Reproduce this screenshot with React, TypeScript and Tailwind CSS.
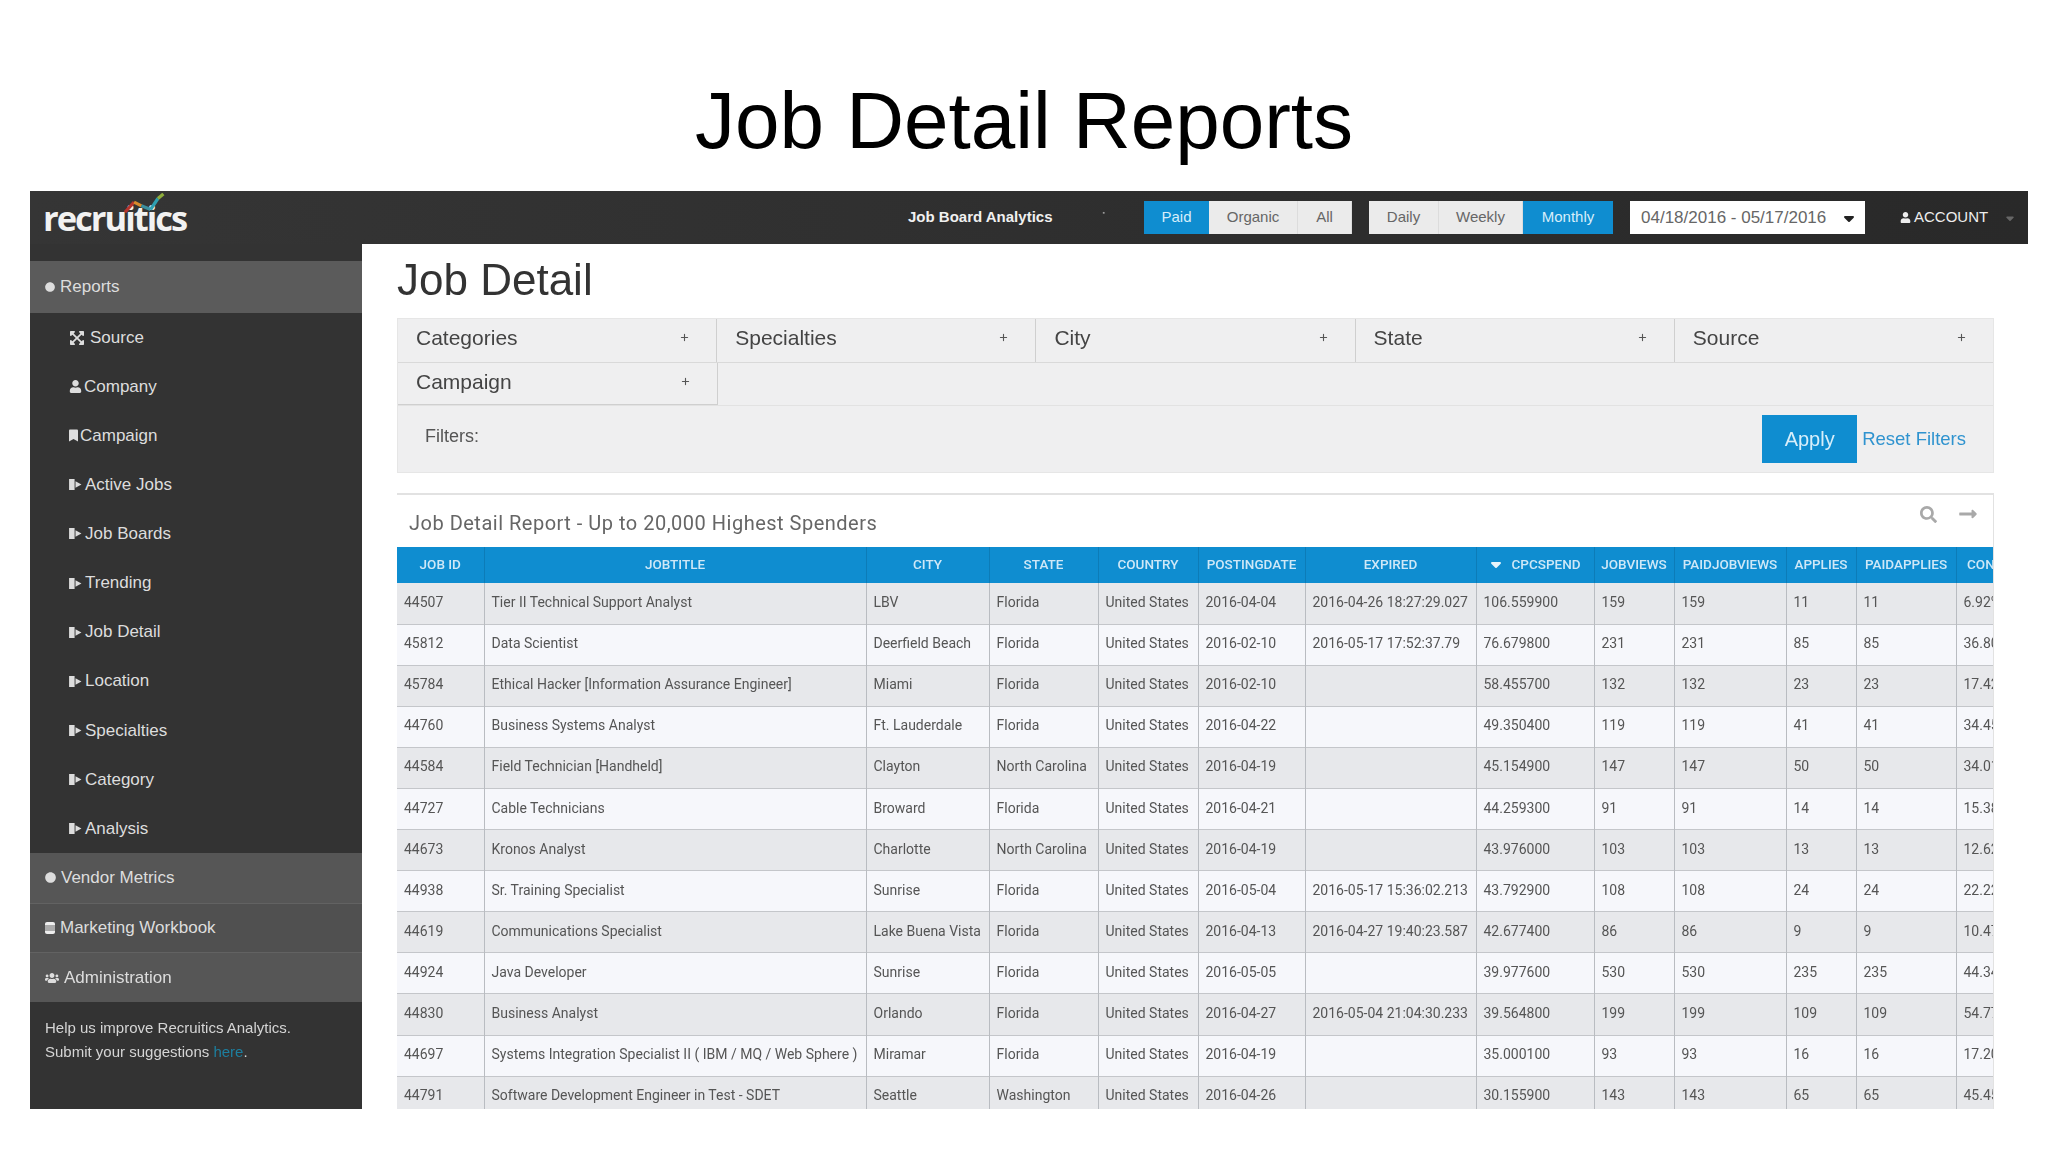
import type { ReactNode } from "react";
import { FaBookmark, FaCircle, FaExpandArrowsAlt, FaLongArrowAltRight, FaSearch, FaUser, FaUsers } from "react-icons/fa";
import { FaCaretDown, FaPlus } from "react-icons/fa6";

const subItems: { label: string; icon: ReactNode }[] = [
  { label: "Source", icon: <FaExpandArrowsAlt className="mr-[3px] h-[16px] w-[16px]" /> },
  { label: "Company", icon: <FaUser className="h-[13px] w-[13px]" /> },
  { label: "Campaign", icon: <FaBookmark className="h-[13px] w-[9px]" /> },
  { label: "Active Jobs", icon: <BarPlay /> },
  { label: "Job Boards", icon: <BarPlay /> },
  { label: "Trending", icon: <BarPlay /> },
  { label: "Job Detail", icon: <BarPlay /> },
  { label: "Location", icon: <BarPlay /> },
  { label: "Specialties", icon: <BarPlay /> },
  { label: "Category", icon: <BarPlay /> },
  { label: "Analysis", icon: <BarPlay /> },
];

const filterCells = ["Categories", "Specialties", "City", "State", "Source"];

const columns = [
  "JOB ID",
  "JOBTITLE",
  "CITY",
  "STATE",
  "COUNTRY",
  "POSTINGDATE",
  "EXPIRED",
  "CPCSPEND",
  "JOBVIEWS",
  "PAIDJOBVIEWS",
  "APPLIES",
  "PAIDAPPLIES",
  "CONVRATE",
];

const rows = [
  ["44507", "Tier II Technical Support Analyst", "LBV", "Florida", "United States", "2016-04-04", "2016-04-26 18:27:29.027", "106.559900", "159", "159", "11", "11", "6.92%"],
  ["45812", "Data Scientist", "Deerfield Beach", "Florida", "United States", "2016-02-10", "2016-05-17 17:52:37.79", "76.679800", "231", "231", "85", "85", "36.80%"],
  ["45784", "Ethical Hacker [Information Assurance Engineer]", "Miami", "Florida", "United States", "2016-02-10", "", "58.455700", "132", "132", "23", "23", "17.42%"],
  ["44760", "Business Systems Analyst", "Ft. Lauderdale", "Florida", "United States", "2016-04-22", "", "49.350400", "119", "119", "41", "41", "34.45%"],
  ["44584", "Field Technician [Handheld]", "Clayton", "North Carolina", "United States", "2016-04-19", "", "45.154900", "147", "147", "50", "50", "34.01%"],
  ["44727", "Cable Technicians", "Broward", "Florida", "United States", "2016-04-21", "", "44.259300", "91", "91", "14", "14", "15.38%"],
  ["44673", "Kronos Analyst", "Charlotte", "North Carolina", "United States", "2016-04-19", "", "43.976000", "103", "103", "13", "13", "12.62%"],
  ["44938", "Sr. Training Specialist", "Sunrise", "Florida", "United States", "2016-05-04", "2016-05-17 15:36:02.213", "43.792900", "108", "108", "24", "24", "22.22%"],
  ["44619", "Communications Specialist", "Lake Buena Vista", "Florida", "United States", "2016-04-13", "2016-04-27 19:40:23.587", "42.677400", "86", "86", "9", "9", "10.47%"],
  ["44924", "Java Developer", "Sunrise", "Florida", "United States", "2016-05-05", "", "39.977600", "530", "530", "235", "235", "44.34%"],
  ["44830", "Business Analyst", "Orlando", "Florida", "United States", "2016-04-27", "2016-05-04 21:04:30.233", "39.564800", "199", "199", "109", "109", "54.77%"],
  ["44697", "Systems Integration Specialist II ( IBM / MQ / Web Sphere )", "Miramar", "Florida", "United States", "2016-04-19", "", "35.000100", "93", "93", "16", "16", "17.20%"],
  ["44791", "Software Development Engineer in Test - SDET", "Seattle", "Washington", "United States", "2016-04-26", "", "30.155900", "143", "143", "65", "65", "45.45%"],
];

function BarPlay() {
  return (
    <svg viewBox="0 0 14 12" className="mr-[1px] h-[11px] w-[13px]" fill="currentColor">
      <rect x="0" y="0" width="6" height="12" />
      <path d="M7 2.5 13.5 6 7 9.5z" />
    </svg>
  );
}

function Logo() {
  return (
    <div className="relative ml-[13px] w-[152px]">
      <span className="font-['Open_Sans',sans-serif] text-[34.5px] leading-[44px] font-bold tracking-[-2px] text-[#f2f2f2]">
        recruitics
      </span>
      <svg viewBox="0 0 50 24" className="absolute top-[-3px] left-[80px] h-[22px] w-[46px]" fill="none" strokeWidth="3.5">
        <path d="M2 21 12 10" stroke="#b5342c" />
        <path d="M12 10 20 14" stroke="#d98a2b" />
        <path d="M20 14 30 18" stroke="#3c8f9e" />
        <path d="M30 18 38 6" stroke="#2f9fb0" />
        <path d="M38 6 44 1" stroke="#8fae3c" />
      </svg>
    </div>
  );
}

function Segment({ label, active, width }: { label: string; active?: boolean; width: string }) {
  return (
    <div className={`flex h-full items-center justify-center ${width} ${active ? "bg-[#0f8dd0] text-[#d7eefa]" : "border-r border-[#dcdcdc] bg-[#ebebeb] text-[#666666]"}`}>
      {label}
    </div>
  );
}

function Topbar() {
  return (
    <header className="flex h-[53px] items-center bg-gradient-to-r from-[#353535] to-[#292929] font-['Liberation_Sans',sans-serif] text-[15px]">
      <Logo />
      <div className="ml-[713px] w-[236px] font-bold whitespace-nowrap text-[#f0f0f0]">
        Job Board Analytics
        <span className="relative -top-[7px] ml-[50px] text-[7px] text-[#999999]">▪</span>
      </div>
      <div className="flex h-[33px] w-[208px] rounded-[2px]">
        <Segment label="Paid" active width="w-[65px]" />
        <Segment label="Organic" width="w-[89px]" />
        <Segment label="All" width="w-[54px]" />
      </div>
      <div className="ml-[17px] flex h-[33px] w-[244px] rounded-[2px]">
        <Segment label="Daily" width="w-[70px]" />
        <Segment label="Weekly" width="w-[84px]" />
        <Segment label="Monthly" active width="w-[90px]" />
      </div>
      <div className="ml-[17px] flex h-[33px] w-[235px] items-center justify-between bg-white pr-[9px] pl-[11px] text-[17px] text-[#666666]">
        <span className="whitespace-nowrap">04/18/2016 - 05/17/2016</span>
        <FaCaretDown className="h-[16px] w-[14px] text-[#222222]" />
      </div>
      <div className="ml-[35px] flex items-center gap-[3px] text-[#eeeeee]">
        <FaUser className="h-[11px] w-[11px]" />
        <span className="whitespace-nowrap">ACCOUNT</span>
        <FaCaretDown className="ml-[14px] h-[12px] w-[10px] text-[#666666]" />
      </div>
    </header>
  );
}

function Sidebar() {
  return (
    <aside className="w-[332px] shrink-0 bg-[#333333] pt-[17px] font-['Liberation_Sans',sans-serif] text-[17px] text-[#dddddd]">
      <div className="flex h-[52px] items-center gap-[5px] bg-[#5b5b5b] pl-[15px]">
        <FaCircle className="h-[10px] w-[10px]" />
        <span>Reports</span>
      </div>
      <nav>
        {subItems.map((item) => (
          <div key={item.label} className="flex h-[49.1px] items-center gap-[2px] pl-[39px]">
            {item.icon}
            <span>{item.label}</span>
          </div>
        ))}
      </nav>
      <div className="flex h-[49.5px] items-center gap-[5px] bg-[#565656] pl-[15px]">
        <FaCircle className="h-[11px] w-[11px]" />
        <span>Vendor Metrics</span>
      </div>
      <div className="flex h-[49.5px] items-center gap-[5px] border-t border-[#626262] bg-[#505050] pl-[15px]">
        <span className="h-[12px] w-[10px] rounded-[2px] border-y-[3px] border-[#eeeeee] bg-[#aaaaaa]" />
        <span>Marketing Workbook</span>
      </div>
      <div className="flex h-[50px] items-center gap-[5px] border-t border-[#626262] bg-[#565656] pl-[15px]">
        <FaUsers className="h-[14px] w-[14px]" />
        <span>Administration</span>
      </div>
      <p className="px-[15px] pt-[14px] text-[15px] leading-[24px] text-[#d5d5d5]">
        Help us improve Recruitics Analytics.
        <br />
        Submit your suggestions <span className="text-[#1d7f9f]">here</span>.
      </p>
    </aside>
  );
}

function FilterCell({ label, last }: { label: string; last?: boolean }) {
  return (
    <div className={`flex h-full flex-1 items-center justify-between pr-[27px] pb-[6px] pl-[18px] ${last ? "" : "border-r border-[#cfcfcf]"}`}>
      <span>{label}</span>
      <FaPlus className="h-[9px] w-[9px] text-[#555555]" />
    </div>
  );
}

function FilterPanel() {
  return (
    <section className="border border-[#e6e6e6] bg-[#efeff0] font-['Liberation_Sans',sans-serif] text-[21px] text-[#444444]">
      <div className="flex h-[44px] border-b border-[#d9d9d9]">
        {filterCells.map((label, i) => (
          <FilterCell key={label} label={label} last={i === filterCells.length - 1} />
        ))}
      </div>
      <div className="flex h-[43px] border-b border-[#e2e2e2]">
        <div className="flex w-[320px] items-center justify-between border-r border-b border-[#cfcfcf] pr-[27px] pb-[4px] pl-[18px]">
          <span>Campaign</span>
          <FaPlus className="h-[9px] w-[9px] text-[#555555]" />
        </div>
      </div>
      <div className="flex h-[66px] items-center justify-between pr-[27px] pl-[27px]">
        <span className="relative -top-[3px] text-[18px] text-[#555555]">Filters:</span>
        <div className="flex items-center gap-[5px]">
          <button className="h-[48px] w-[95px] bg-[#0f8dd0] text-[20px] text-[#d7eefa]">Apply</button>
          <span className="text-[18.5px] text-[#2f93cf]">Reset Filters</span>
        </div>
      </div>
    </section>
  );
}

function ReportTable() {
  return (
    <div className="overflow-hidden">
      <table className="w-[1650px] table-fixed border-collapse font-['Roboto',sans-serif] text-[14px] text-[#555555]">
        <colgroup>
          <col className="w-[87px]" />
          <col className="w-[382px]" />
          <col className="w-[123px]" />
          <col className="w-[109px]" />
          <col className="w-[100px]" />
          <col className="w-[107px]" />
          <col className="w-[171px]" />
          <col className="w-[118px]" />
          <col className="w-[80px]" />
          <col className="w-[112px]" />
          <col className="w-[70px]" />
          <col className="w-[100px]" />
          <col className="w-[91px]" />
        </colgroup>
        <thead>
          <tr className="h-[36px] bg-[#0f8dd0] text-[#cfe8f7]">
            {columns.map((col) => (
              <th key={col} className="border-r border-[#0c7cb8] pb-[2px] text-center text-[13.5px] font-medium whitespace-nowrap">
                {col === "CPCSPEND" ? (
                  <span className="flex items-center justify-center gap-[8px]">
                    <FaCaretDown className="h-[16px] w-[14px] text-[#e6f4fb]" />
                    {col}
                  </span>
                ) : (
                  col
                )}
              </th>
            ))}
          </tr>
        </thead>
        <tbody>
          {rows.map((row, i) => (
            <tr key={row[0]} className={`h-[41.1px] border-b border-[#c4c6ca] ${i % 2 === 0 ? "bg-[#e7e8eb]" : "bg-[#f6f7fb]"}`}>
              {row.map((cell, j) => (
                <td key={j} className="border-r border-[#b9bcc1] px-[7px] pb-[2px] whitespace-nowrap">
                  {cell}
                </td>
              ))}
            </tr>
          ))}
        </tbody>
      </table>
    </div>
  );
}

export default function App() {
  return (
    <div className="min-h-[1152px] bg-white font-['Liberation_Sans',sans-serif]">
      <div className="flex h-[191px] items-end justify-center pb-[24px] text-center text-[80px] leading-[92px] text-black">
        Job Detail Reports
      </div>
      <div className="ml-[30px] h-[918px] w-[1998px] overflow-hidden blur-[0.7px]">
        <Topbar />
        <div className="flex h-[865px]">
          <Sidebar />
          <main className="min-w-0 flex-1 pr-[34px] pl-[35px]">
            <h1 className="h-[74px] text-[44px] leading-[72px] text-[#333333]">Job Detail</h1>
            <FilterPanel />
            <div className="mt-[20px] border-t-2 border-r border-[#e2e2e2]">
              <div className="flex h-[52px] items-center justify-between pt-[4px] pr-[14px] pl-[12px]">
                <span className="font-['Roboto',sans-serif] text-[20px] tracking-[0.5px] text-[#666666]">
                  Job Detail Report - Up to 20,000 Highest Spenders
                </span>
                <div className="flex items-center gap-[20px] pb-[18px] text-[#a9a9a9]">
                  <FaSearch className="h-[17px] w-[17px]" />
                  <FaLongArrowAltRight className="h-[20px] w-[22px]" />
                </div>
              </div>
              <ReportTable />
            </div>
          </main>
        </div>
      </div>
    </div>
  );
}
